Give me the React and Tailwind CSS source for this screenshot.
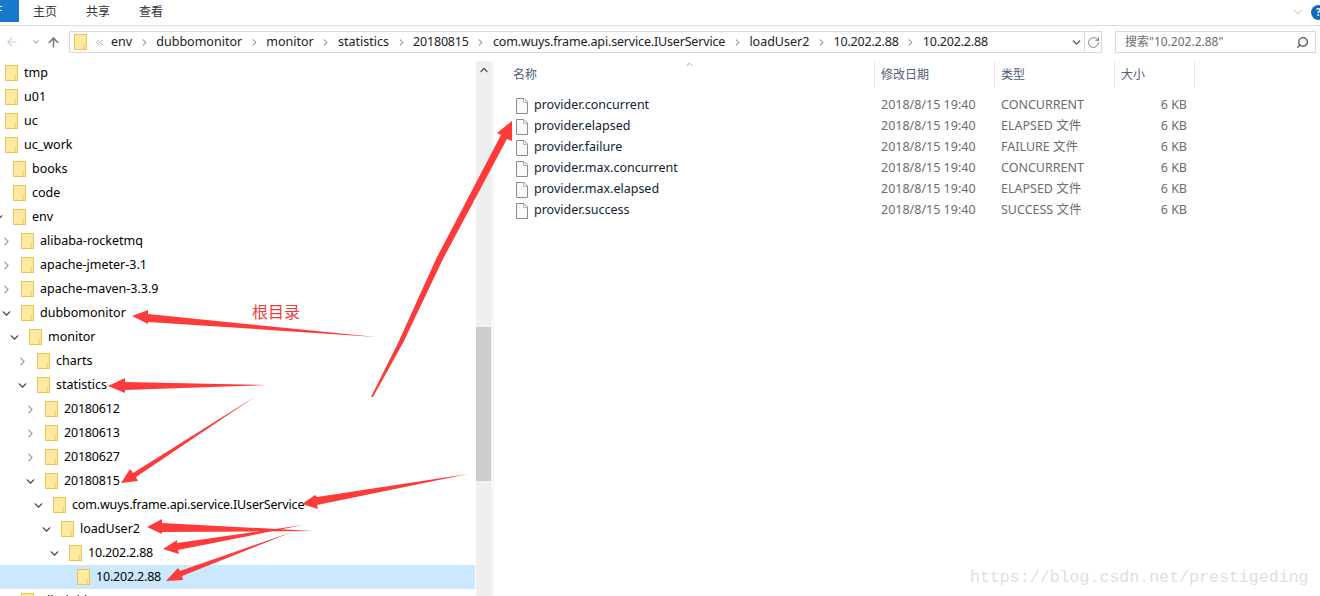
import React from "react";
import { ArrowLeft, ArrowUp, ChevronDown, ChevronRight, ChevronUp, ChevronsLeft, RotateCw, Search } from "lucide-react";

const tree = [
  ["tmp", 0, ""], ["u01", 0, ""], ["uc", 0, ""], ["uc_work", 0, ""],
  ["books", 1, ""], ["code", 1, ""], ["env", 1, "o"],
  ["alibaba-rocketmq", 2, "c"], ["apache-jmeter-3.1", 2, "c"], ["apache-maven-3.3.9", 2, "c"],
  ["dubbomonitor", 2, "o"], ["monitor", 3, "o"], ["charts", 4, "c"], ["statistics", 4, "o"],
  ["20180612", 5, "c"], ["20180613", 5, "c"], ["20180627", 5, "c"], ["20180815", 5, "o"],
  ["com.wuys.frame.api.service.IUserService", 6, "o"], ["loadUser2", 7, "o"], ["10.202.2.88", 8, "o"],
  ["10.202.2.88", 9, "", true], ["elk-dubbo", 2, ""],
];

const crumbs = ["env", "dubbomonitor", "monitor", "statistics", "20180815", "com.wuys.frame.api.service.IUserService", "loadUser2", "10.202.2.88", "10.202.2.88"];

const files = [
  ["provider.concurrent", "CONCURRENT"],
  ["provider.elapsed", "ELAPSED 文件"],
  ["provider.failure", "FAILURE 文件"],
  ["provider.max.concurrent", "CONCURRENT"],
  ["provider.max.elapsed", "ELAPSED 文件"],
  ["provider.success", "SUCCESS 文件"],
];

const arrows = [
  "512,121 497,133 501,135 436,259 398,343 371,397 373,397 403,343 443,259 507,139 512,141",
  "132,316 148,310 148,314 376,337 148,322 148,324",
  "108,386 125,378 125,382 267,385 125,390 125,393",
  "121,483 130,469 133,473 256,396 136,477 138,481",
  "302,504 315,495 317,497 468,474 317,505 318,509",
  "147,527 162,519 162,523 313,531 162,532 162,534",
  "163,549 177,540 177,543 303,525 178,550 179,554",
  "166,581 178,568 180,571 292,532 182,576 183,580",
];

function tightClass(name) {
  if (name.startsWith("com.")) return "tracking-[-0.17px]";
  if (/^\d/.test(name)) return "tracking-[-0.2px]";
  return "";
}

function Folder() {
  return (
    <svg width="13" height="16" viewBox="0 0 13 16" className="shrink-0">
      <rect x="0.5" y="0.5" width="12" height="15" fill="#fde99f" stroke="#ecc452" />
      <path d="M10 15.5V10.5H12.5" fill="#fff3c4" stroke="#ecc452" />
    </svg>
  );
}

function FileIcon() {
  return (
    <svg width="12" height="16" viewBox="0 0 12 16" className="shrink-0">
      <path d="M0.5 0.5H8L11.5 4V15.5H0.5Z" fill="#fafafa" stroke="#8c8c8c" />
      <path d="M7.5 0.5V4.5H11.5" fill="none" stroke="#b4b4b4" />
    </svg>
  );
}

function TreeRow({ name, level, state, selected }) {
  return (
    <div className={"flex h-6 items-center text-[12.5px] text-black " + (selected ? "bg-[#cce8ff]" : "")}>
      <div className="flex shrink-0 items-center" style={{ marginLeft: level * 8 - 18 }}>
        <div className="flex w-4 justify-center">
          {state === "o" && <ChevronDown size={13} strokeWidth={2.5} color="#404040" />}
          {state === "c" && <ChevronRight size={13} strokeWidth={2.5} color="#a6a6a6" />}
        </div>
        <div className="ml-[7px] mr-[6px]"><Folder /></div>
      </div>
      <span className={"whitespace-nowrap " + tightClass(name)}>{name}</span>
    </div>
  );
}

export default function App() {
  return (
    <div className="relative h-[596px] w-[1320px] overflow-hidden bg-white font-['Noto_Sans','Noto_Sans_CJK_SC',sans-serif] text-[13px]">
      {/* ribbon */}
      <div className="flex h-[26px] items-start border-b border-[#dadbdc]">
        <div className="flex h-[22px] w-[19px] items-center overflow-hidden bg-[#1979ca] text-white">
          <span className="-ml-1 text-[12px]">F</span>
        </div>
        <div className="ml-[14px] flex h-[24px] items-center gap-[29px] text-[12px] text-[#333]">
          <span>主页</span><span>共享</span><span>查看</span>
        </div>
        <div className="ml-auto flex h-[24px] items-center gap-[6px]">
          <ChevronDown size={14} strokeWidth={1} color="#888" />
          <div className="-mr-[6px] flex h-[15px] w-[15px] items-center justify-center rounded-full bg-[#0f6cbd] text-[10px] font-bold text-white">?</div>
        </div>
      </div>

      {/* address row */}
      <div className="flex h-[35px] items-start pt-[5px]">
        <div className="flex h-[22px] w-[69px] items-center">
          <ArrowLeft size={14} strokeWidth={2} color="#cfcfcf" className="ml-[5px]" />
          <ChevronDown size={10} strokeWidth={2.5} color="#9a9a9a" className="ml-[12px]" />
          <ArrowUp size={15} strokeWidth={2.5} color="#7a7a7a" className="ml-[5px]" />
        </div>
        <div className="flex h-[22px] w-[1033px] items-center border border-[#d9d9d9] pl-[4px] text-[12.5px] text-[#222]">
          <Folder />
          <ChevronsLeft size={11} strokeWidth={1.5} color="#777" className="ml-[7px]" />
          <div className="ml-[5px] flex items-center gap-[5.6px] pt-px">
            {crumbs.map((c, i) => (
              <React.Fragment key={i}>
                {i > 0 && <ChevronRight size={11} strokeWidth={2.25} color="#808080" />}
                <span className={"whitespace-nowrap px-[1px] " + tightClass(c)}>{c}</span>
              </React.Fragment>
            ))}
          </div>
          <div className="ml-auto flex h-full items-center">
            <ChevronDown size={13} strokeWidth={2.5} color="#555" />
            <div className="ml-[1px] flex h-full w-[17px] items-center justify-center border-l border-[#d9d9d9]">
              <RotateCw size={13} strokeWidth={1.75} color="#777" />
            </div>
          </div>
        </div>
        <div className="ml-[13px] flex h-[22px] w-[201px] items-center border border-[#d9d9d9] pl-[9px] pr-[6px] text-[12px] text-[#6d6d6d]">
          <span>搜索"10.202.2.88"</span>
          <Search size={13} strokeWidth={2.5} color="#555" className="ml-auto -scale-x-100" />
        </div>
      </div>

      {/* body */}
      <div className="flex h-[535px]">
        <div className="h-full w-[476px] overflow-hidden pr-px">
          {tree.map(([n, l, s, sel], i) => <TreeRow key={i} name={n} level={l} state={s} selected={sel} />)}
        </div>
        <div className="flex h-full w-[16px] flex-col bg-[#efefef] pr-px">
          <div className="flex h-[17px] items-center justify-center">
            <ChevronUp size={12} strokeWidth={2.5} color="#505050" />
          </div>
          <div className="mt-[249px] h-[154px] bg-[#cdcdcd]" />
        </div>
        <div className="ml-px h-full w-px bg-[#f2f2f2]" />

        <div className="flex-1 pt-px">
          <div className="relative flex h-[25px] items-center text-[12px] text-[#4c607a]">
            <div className="flex h-full w-[381px] items-center border-r border-[#e5e5e5] pl-[19px]">名称</div>
            <div className="flex h-full w-[120px] items-center border-r border-[#e5e5e5] pl-[6px]">修改日期</div>
            <div className="flex h-full w-[120px] items-center border-r border-[#e5e5e5] pl-[6px]">类型</div>
            <div className="flex h-full w-[80px] items-center border-r border-[#e5e5e5] pl-[6px]">大小</div>
            <ChevronUp size={11} strokeWidth={1.25} color="#666" className="absolute left-[190px] -top-[3px]" />
          </div>
          <div className="pt-[8px]">
            {files.map(([n, t]) => (
              <div key={n} className="flex h-[21px] items-center text-[12.5px]">
                <div className="ml-[22px] mr-[6px]"><FileIcon /></div>
                <span className="w-[347px] whitespace-nowrap text-[#111d33]">{n}</span>
                <span className="w-[120px] whitespace-nowrap text-[#6d6d6d]">2018/8/15 19:40</span>
                <span className="w-[159px] whitespace-nowrap text-[#6d6d6d]">{t}</span>
                <span className="-ml-[13px] w-[40px] whitespace-nowrap text-right text-[#6d6d6d]">6 KB</span>
              </div>
            ))}
          </div>
        </div>
      </div>

      {/* annotations drawn over the screenshot */}
      <svg width="1320" height="596" viewBox="0 0 1320 596" className="pointer-events-none absolute left-0 top-0">
        {arrows.map((p) => <polygon key={p} points={p} fill="#fd3b3b" />)}
      </svg>
      <span className="absolute left-[252px] top-[300px] text-[16px] text-[#f03a3a]">根目录</span>
      <span className="absolute left-[970px] top-[566px] font-['Liberation_Mono',monospace] text-[16.6px] text-[#e0dfda]">https://blog.csdn.net/prestigeding</span>
    </div>
  );
}
